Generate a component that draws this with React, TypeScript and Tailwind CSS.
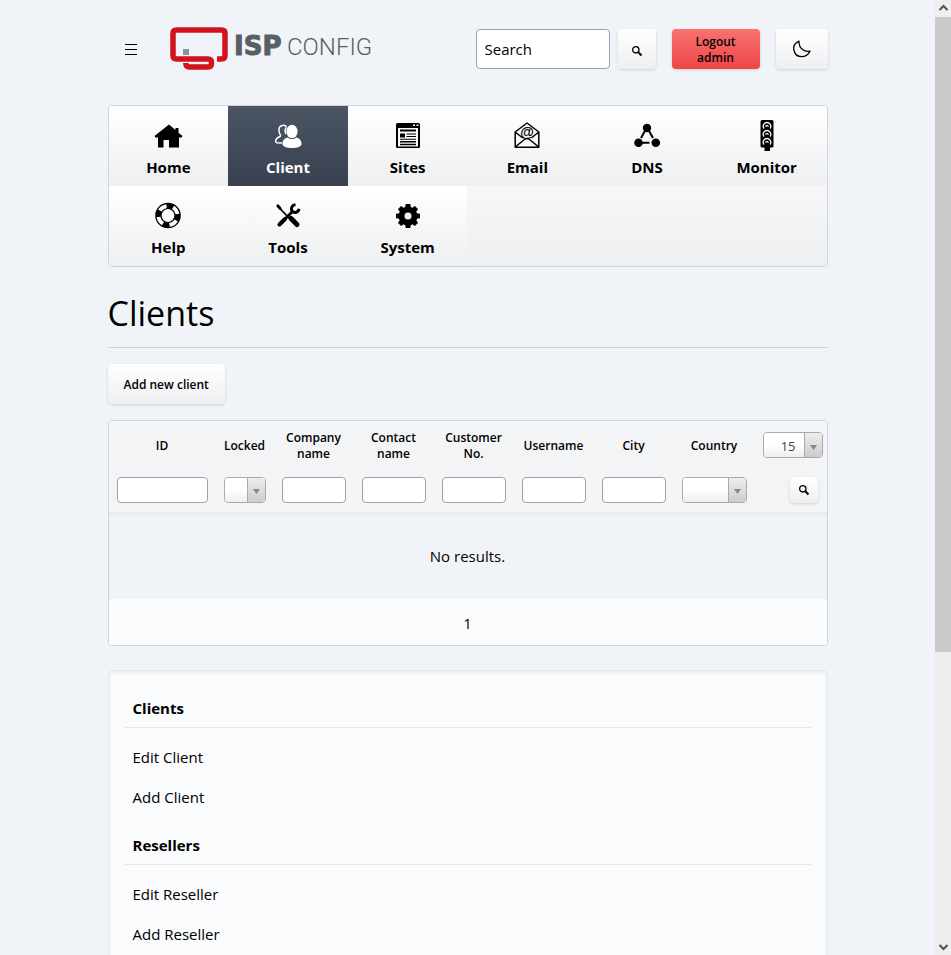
import type { ReactNode } from "react";

const icons: Record<string, ReactNode> = {
  Home: (
    <path
      fill="currentColor"
      d="M17 4.500 2.500 16 4 18l2-1v10.500h5.500V20H17v7.500h10V17l2 1 1.500-2-4-3.200V8h-3v2z"
    />
  ),
  Client: (
    <>
      <path
        fill="none"
        stroke="currentColor"
        strokeWidth="1.500"
        d="M14.500 7C13.500 5.500 11.500 5 9.500 5.800 7.500 6.500 6.800 8.500 7 11c.2 2 1 3 1.600 4.500.2 1.500-3.800 1.500-4.800 4.500-.3 1.300 0 2.500 1.200 2.800l5 .2M14.500 7C12.800 9 13 12 13.800 14"
      />
      <ellipse cx="20" cy="11.500" rx="5.600" ry="6.800" fill="currentColor" />
      <path
        fill="currentColor"
        d="M16 17.500c1.500 2 6.500 2 8 0 3.500.5 5.500 3 5.500 6.500 0 2.500-4.500 4-9.500 4s-9.500-1.500-9.500-4c0-3.500 2-6 5.500-6.500z"
      />
    </>
  ),
  Sites: (
    <>
      <rect x="4" y="3" width="24" height="25" rx="1.500" fill="currentColor" />
      <path fill="#f9fafb" d="M21 4.500h2v1.500h-2zM24.500 4.500h2v1.500h-2zM6 8h20v18.500H6z" />
      <path
        fill="currentColor"
        d="M8 9.500h16v2H8zM8 13.500h5v4H8zM14.500 13.500H24v1H14.500zM14.500 16H24v1H14.500zM8 18.800h16v1H8zM8 21h16v1.500H8zM8 23.800h16v1.500H8z"
      />
    </>
  ),
  Email: (
    <>
      <path
        fill="none"
        stroke="currentColor"
        strokeWidth="1.500"
        strokeLinejoin="round"
        d="M4.200 12 16 3l11.800 9v15.200H4.200zM4.200 12l7.500 6M27.800 12l-7.500 6M4.200 27 13.500 19.500Q16 17.500 18.500 19.500L27.800 27"
      />
      <text
        x="16"
        y="17"
        textAnchor="middle"
        fontSize="14"
        fontWeight="bold"
        fontFamily="Liberation Sans, sans-serif"
        fill="currentColor"
      >
        @
      </text>
    </>
  ),
  DNS: (
    <>
      <path stroke="currentColor" strokeWidth="2" d="m15 9-5 9M17 9l5 9M9 22.700h9.500" />
      <circle cx="16" cy="8" r="4.200" fill="currentColor" />
      <circle cx="7.500" cy="22.700" r="4.300" fill="currentColor" />
      <circle cx="24.800" cy="22.700" r="4.300" fill="currentColor" />
    </>
  ),
  Monitor: (
    <>
      <path
        fill="currentColor"
        d="M11 0h10q1.500 0 1.500 1.500V26q0 1.500-1.500 1.500h-2V31h-5.500v-3.500H11q-1.500 0-1.500-1.500V1.500Q9.500 0 11 0z"
      />
      <g fill="none" stroke="#f9fafb" strokeWidth="1.300">
        <path d="M13 8.500a3.700 3.700 0 1 1 6 0M14.500 6.500a1.700 1.700 0 0 1 3 0" />
        <path d="M13 16.500a3.700 3.700 0 1 1 6 0M14.500 14.500a1.700 1.700 0 0 1 3 0" />
        <path d="M13 24.500a3.700 3.700 0 1 1 6 0M14.500 22.500a1.700 1.700 0 0 1 3 0" />
      </g>
    </>
  ),
  Help: (
    <>
      <circle cx="16" cy="15.500" r="9.600" fill="none" stroke="currentColor" strokeWidth="6.400" />
      <circle
        cx="16"
        cy="15.500"
        r="9.600"
        fill="none"
        stroke="#fbfbfc"
        strokeWidth="3.800"
        pathLength="80"
        strokeDasharray="11 9"
        strokeDashoffset="-7"
      />
    </>
  ),
  Tools: (
    <>
      <path stroke="currentColor" strokeWidth="1.800" d="M6 6.500 18 19" />
      <path stroke="currentColor" strokeWidth="2.800" strokeLinecap="round" d="m5.800 5.800 2.500 2.800" />
      <path stroke="currentColor" strokeWidth="5" strokeLinecap="round" d="m19 18.500 6 6" />
      <path stroke="currentColor" strokeWidth="4" strokeLinecap="round" d="m7.500 24.500 5.500-5.500" />
      <path stroke="currentColor" strokeWidth="2.800" d="m12 20 8.500-8.500" />
      <path
        fill="none"
        stroke="currentColor"
        strokeWidth="3"
        d="M23.500 4.800c-3.500.2-5 3.200-3.500 6.200 2.500 2.500 6.500 1.500 7-2.300"
      />
    </>
  ),
  System: (
    <>
      <circle cx="16" cy="16" r="6.500" fill="none" stroke="currentColor" strokeWidth="6" />
      <g fill="currentColor">
        {[0, 45, 90, 135, 180, 225, 270, 315].map((angle) => (
          <rect key={angle} x="13.400" y="4" width="5.200" height="5" rx="1" transform={`rotate(${angle} 16 16)`} />
        ))}
      </g>
    </>
  ),
};

const modules = ["Home", "Client", "Sites", "Email", "DNS", "Monitor", "Help", "Tools", "System"];

const filters = [
  { id: "id", label: "ID", kind: "text", width: "" },
  { id: "locked", label: "Locked", kind: "select", width: "w-[58px]" },
  { id: "company", label: "Company name", kind: "text", width: "w-20" },
  { id: "contact", label: "Contact name", kind: "text", width: "w-20" },
  { id: "customer", label: "Customer No.", kind: "text", width: "w-20" },
  { id: "username", label: "Username", kind: "text", width: "w-20" },
  { id: "city", label: "City", kind: "text", width: "w-20" },
  { id: "country", label: "Country", kind: "select", width: "w-[81px]" },
];

const sections = [
  { title: "Clients", links: ["Edit Client", "Add Client"] },
  { title: "Resellers", links: ["Edit Reseller", "Add Reseller"] },
];

const raised = "rounded bg-linear-to-b from-white to-[#eeeff1] shadow-[0_1px_3px_rgba(0,0,0,0.14)]";

function Logo() {
  return (
    <svg width="202" height="44" viewBox="0 0 202 44" role="img" aria-label="ISPConfig">
      <g fill="none" stroke="#d0131c" strokeWidth="5.500">
        <path d="M47 32h4.500q3.500 0 3.500-3.500V6.500Q55 3 51.500 3H6.500Q3 3 3 6.500V28.500Q3 32 6.500 32H38q3.500 0 3.500 3.500v1q0 3.500-3.500 3.500H19.500q-3.700 0-3.700-4" />
      </g>
      <rect x="13" y="22" width="6" height="6" fill="#8d949b" />
      <text
        x="64"
        y="28"
        fontSize="26"
        fontWeight="bold"
        fontFamily="DejaVu Sans, sans-serif"
        fill="#586064"
        stroke="#586064"
        strokeWidth="1"
      >
        ISP
      </text>
      <text x="117" y="28" fontSize="24" fontWeight="300" fontFamily="Roboto, sans-serif" fill="#586064">
        CONFIG
      </text>
    </svg>
  );
}

function SearchIcon() {
  return (
    <svg width="12" height="12" viewBox="0 0 12 12" fill="none" stroke="black" aria-hidden="true">
      <circle cx="4.800" cy="4.800" r="3.200" strokeWidth="1.300" />
      <path d="m7.500 7.500 3 3" strokeWidth="2" />
    </svg>
  );
}

function Dropdown({ id, label, value = "" }: { id: string; label?: string; value?: string }) {
  return (
    <div className="relative h-[26px] overflow-hidden rounded border border-[#aaaaaa]">
      <select
        id={id}
        aria-label={label}
        defaultValue={value}
        className="block h-full w-full appearance-none bg-linear-to-b from-white from-50% to-[#eeeeee] pt-0.5 pr-[26px] text-right text-[13px] font-normal text-[#444444]"
      >
        <option value={value}>{value}</option>
      </select>
      <span className="pointer-events-none absolute inset-y-0 right-0 flex w-[18px] items-center justify-center border-l border-[#aaaaaa] bg-linear-to-b from-[#eeeeee] to-[#cccccc] pt-1">
        <svg width="7" height="5" viewBox="0 0 7 5" aria-hidden="true">
          <path d="M0 0h7L3.500 5z" fill="#888888" />
        </svg>
      </span>
    </div>
  );
}

function Scrollbar() {
  return (
    <div aria-hidden="true" className="flex w-4 shrink-0 flex-col bg-[#eeeeef]">
      <svg className="h-[17px] w-4 shrink-0" viewBox="0 0 16 17" fill="none" stroke="#505050" strokeWidth="2">
        <path d="m4.500 10 4-4 4 4" />
      </svg>
      <div className="flex-1">
        <div className="h-[69%] bg-[#cbcbcb]" />
      </div>
      <svg className="h-[17px] w-4 shrink-0" viewBox="0 0 16 17" fill="none" stroke="#505050" strokeWidth="2">
        <path d="m4.500 7 4 4 4-4" />
      </svg>
    </div>
  );
}

export default function App() {
  return (
    <div className="flex h-screen bg-[#f0f4f9] font-['Open_Sans','Noto_Sans',sans-serif] text-[15px] leading-6 text-black">
      <div className="min-w-0 flex-1 overflow-y-auto [scrollbar-width:none]">
        <div className="mx-auto w-full max-w-[720px]">
          <header className="flex h-[105px] items-start pt-[29px]">
            <button type="button" aria-label="Menu" className="ml-4 flex h-10 items-center">
              <svg width="14" height="14" viewBox="0 0 14 14" stroke="black" aria-hidden="true">
                <path d="M1 2.500h12M1 7.500h12M1 12.500h12" />
              </svg>
            </button>
            <a href="#home" className="ml-8 flex h-10 items-center">
              <Logo />
            </a>
            <form className="ml-auto flex gap-2" onSubmit={(event) => event.preventDefault()}>
              <input
                type="search"
                aria-label="Search"
                placeholder="Search"
                className="h-10 w-[134px] rounded border border-[#9ca3af] bg-white px-2 placeholder:text-black"
              />
              <button type="submit" aria-label="Search" className={`flex h-10 w-[38px] items-center justify-center pt-1 ${raised}`}>
                <SearchIcon />
              </button>
            </form>
            <button
              type="button"
              className="ml-4 h-10 w-22 rounded bg-linear-to-b from-[#f87171] to-[#ef4444] px-4 pt-0.5 text-xs leading-4 font-semibold shadow-[0_1px_3px_rgba(0,0,0,0.14)]"
            >
              Logout admin
            </button>
            <button type="button" aria-label="Dark mode" className={`ml-4 flex h-10 w-13 items-center justify-center ${raised}`}>
              <svg width="20" height="20" viewBox="0 0 20 20" fill="none" stroke="black" strokeWidth="1.300" strokeLinejoin="round" aria-hidden="true">
                <path d="M7 2.200C3 4 1 7.500 2 11.500c1 4 4 6.200 7.500 6.200 4 0 7-2.200 8.500-5.700C13.500 13.500 6.500 10 7 2.200z" />
              </svg>
            </button>
          </header>

          <nav className="grid grid-cols-6 overflow-hidden rounded border border-[#d1d5db] bg-linear-to-b from-white to-[#eeeff1]">
            {modules.map((name) => (
              <a
                key={name}
                href={`#${name.toLowerCase()}`}
                className={`flex h-20 flex-col items-center bg-linear-to-b pt-3.5 leading-[30px] font-bold ${
                  name === "Client" ? "from-[#4b5563] to-[#394150] text-white" : "from-white to-[#eeeff1]"
                }`}
              >
                <svg className="size-8" viewBox="0 0 32 32" aria-hidden="true">
                  {icons[name]}
                </svg>
                {name}
              </a>
            ))}
          </nav>

          <main>
            <h1 className="mt-[22px] border-b border-[#d1d5db] pb-[10px] text-[34px] leading-[48px]">Clients</h1>
            <button type="button" className={`mt-4 block h-10 px-4 pt-0.5 text-xs font-semibold ${raised}`}>
              Add new client
            </button>

            <div className="mt-4 overflow-hidden rounded border border-[#d1d5db]">
              <table className="w-full table-fixed text-center">
                <thead className="bg-[#f3f4f6] text-xs leading-4 font-semibold">
                  <tr className="h-12">
                    {filters.map(({ id, label, width }) => (
                      <th key={id} scope="col" className={`px-1 pt-0.5 font-semibold ${width}`}>
                        <label htmlFor={id}>{label}</label>
                      </th>
                    ))}
                    <th scope="col" className="w-[72px] pr-1 pl-2">
                      <Dropdown id="limit" label="Rows per page" value="15" />
                    </th>
                  </tr>
                  <tr className="h-[43px]">
                    {filters.map(({ id, kind }) => (
                      <td key={id} className="px-2 pb-0.5">
                        {kind === "select" ? (
                          <Dropdown id={id} />
                        ) : (
                          <input id={id} type="text" className="block h-[26px] w-full rounded border border-[#9ca3af] bg-white px-1" />
                        )}
                      </td>
                    ))}
                    <td className="pr-[9px] pb-0.5 pl-2">
                      <button type="button" aria-label="Filter" className={`ml-auto flex h-[26px] w-7 items-center justify-center ${raised}`}>
                        <SearchIcon />
                      </button>
                    </td>
                  </tr>
                </thead>
                <tbody className="shadow-[inset_0_2px_4px_rgba(0,0,0,0.05)]">
                  <tr>
                    <td colSpan={9} className="h-[87px]">
                      No results.
                    </td>
                  </tr>
                </tbody>
                <tfoot className="bg-[#f9fbfd]">
                  <tr>
                    <td colSpan={9} className="h-[46px] pt-px">
                      1
                    </td>
                  </tr>
                </tfoot>
              </table>
            </div>
          </main>

          <aside className="mt-6 rounded border border-[#e5e7eb] bg-[#f9fbfd] px-4 pt-[9px] pb-[100px] shadow-[inset_0_2px_4px_rgba(0,0,0,0.06)]">
            {sections.map(({ title, links }) => (
              <section key={title}>
                <h2 className="mb-[9px] border-b border-[#e5e7eb] px-2 pt-[15px] pb-1.5 leading-[26px] font-bold">{title}</h2>
                <ul>
                  {links.map((link) => (
                    <li key={link}>
                      <a href={`#${link.toLowerCase().replace(" ", "-")}`} className="block px-2 py-2">
                        {link}
                      </a>
                    </li>
                  ))}
                </ul>
              </section>
            ))}
          </aside>
        </div>
      </div>
      <Scrollbar />
    </div>
  );
}
